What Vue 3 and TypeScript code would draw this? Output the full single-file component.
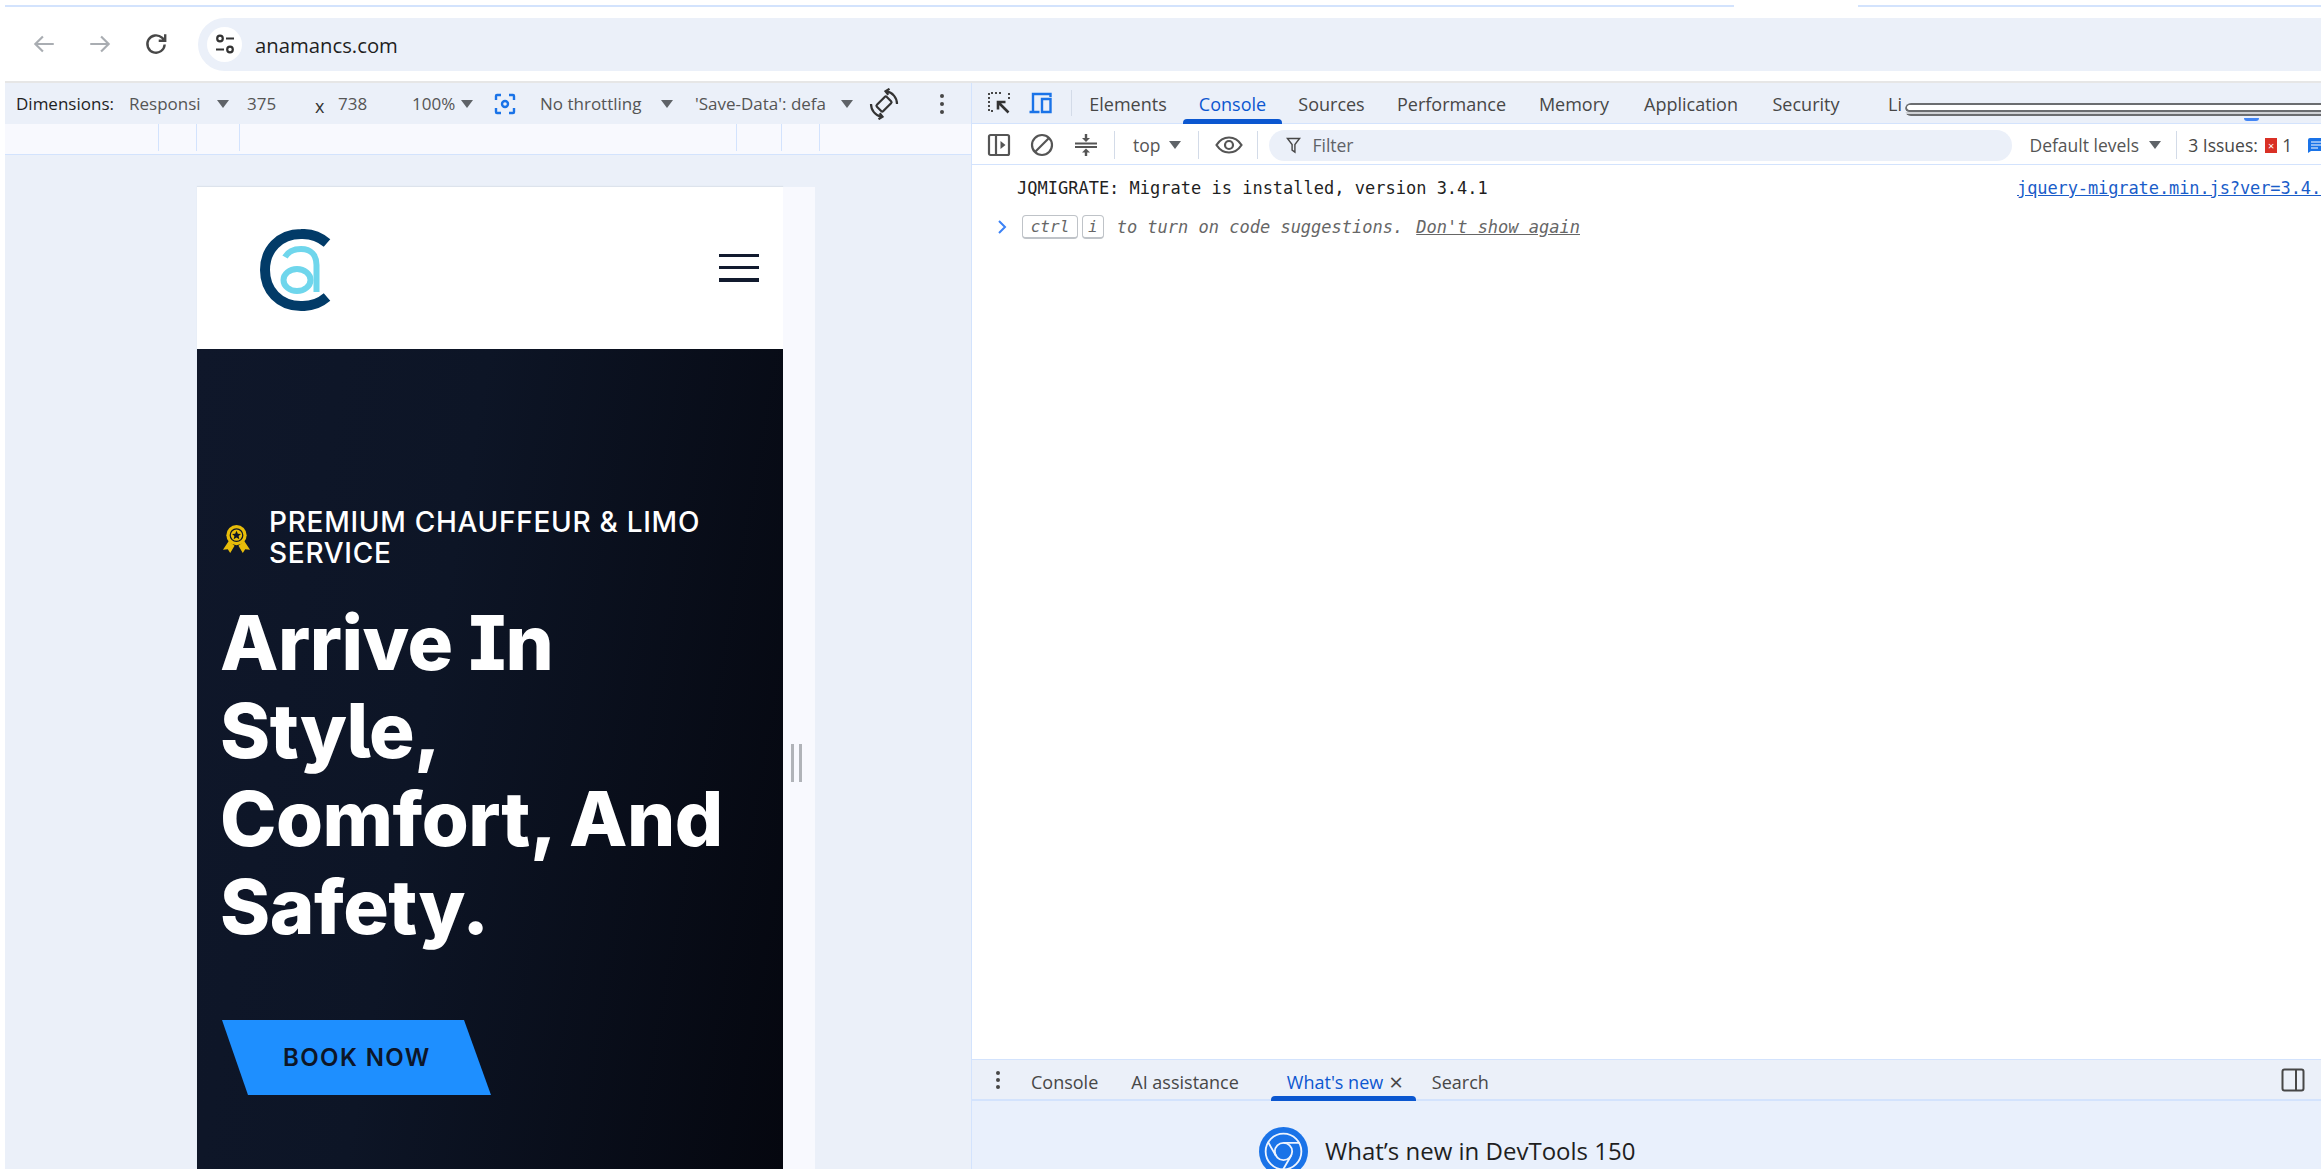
<script setup lang="ts">
const rulerColumns: number[] = [154, 38, 43, 497, 45, 38]
const panelTabs: { label: string; width: number; active?: boolean }[] = [
  { label: 'Elements', width: 110 },
  { label: 'Console', width: 99, active: true },
  { label: 'Sources', width: 99 },
  { label: 'Performance', width: 141 },
  { label: 'Memory', width: 104 },
  { label: 'Application', width: 130 },
  { label: 'Security', width: 100 },
]
const headingLines: string[] = ['Arrive In', 'Style,', 'Comfort, And', 'Safety.']
</script>

<template>
  <div class="window">
    <div class="frame-edge">
      <span class="edge-a"></span>
      <span class="edge-gap"></span>
      <span class="edge-b"></span>
    </div>

    <header class="browser-bar">
      <svg class="nav-icon back" viewBox="0 0 24 24"><path d="M21 12H4M11 5l-7 7 7 7" /></svg>
      <svg class="nav-icon forward" viewBox="0 0 24 24"><path d="M3 12h17M13 5l7 7-7 7" /></svg>
      <svg class="nav-icon reload" viewBox="0 0 24 24"><path d="M20 12.500a8 8 0 1 1-2.500-6.300L20 8.500M20.500 3v6h-6" /></svg>
      <div class="address">
        <span class="site-chip">
          <svg viewBox="0 0 24 24" class="tune"><circle cx="7" cy="6.500" r="2.800" /><path d="M13 6.500h8M3 17.500h8" /><circle cx="17" cy="17.500" r="2.800" /></svg>
        </span>
        <span class="url">anamancs.com</span>
      </div>
    </header>

    <div class="workspace">
      <section class="device-pane">
        <div class="device-toolbar">
          <span class="dt-label">Dimensions:</span>
          <span class="dt-value clip-responsive">Responsi</span>
          <span class="tri t1"></span>
          <span class="dt-value num-w">375</span>
          <span class="times">x</span>
          <span class="dt-value num-h">738</span>
          <span class="dt-value clip-zoom">100%</span>
          <span class="tri t2"></span>
          <svg class="capture" viewBox="0 0 24 24"><path d="M3 8V4a1 1 0 0 1 1-1h4M16 3h4a1 1 0 0 1 1 1v4M21 16v4a1 1 0 0 1-1 1h-4M8 21H4a1 1 0 0 1-1-1v-4" /><circle cx="12" cy="12" r="3" /></svg>
          <span class="dt-value throttle">No throttling</span>
          <span class="tri t3"></span>
          <span class="dt-value clip-save">'Save-Data': defa</span>
          <span class="tri t4"></span>
          <svg class="rotate" viewBox="0 0 32 32">
            <rect x="11.500" y="9" width="9" height="14" rx="1.500" transform="rotate(45 16 16)" />
            <path d="M18.300 3.200A13 13 0 0 1 29 16M13.700 28.800A13 13 0 0 1 3 16" />
            <path d="M21.500 0.800 17.500 3.200l2.800 3.500M10.500 31.200l4-2.400-2.800-3.500" />
          </svg>
          <span class="kebab"><i></i><i></i><i></i></span>
        </div>

        <div class="ruler">
          <span v-for="(w, i) in rulerColumns" :key="i" class="ruler-cell" :style="{ width: w + 'px' }"></span>
        </div>

        <div class="viewport">
          <div class="phone-row">
            <div class="phone">
              <div class="site-header">
                <svg class="logo" viewBox="0 0 72 82" role="img" aria-label="CA logo">
                  <path class="logo-c" d="M67 14A37 36 0 0 0 41 5C19 5 5 21 5 41s14 36 36 36a37 36 0 0 0 26-9" />
                  <ellipse class="logo-a" cx="37" cy="51" rx="13.500" ry="11" />
                  <path class="logo-a" d="M25 28c4-7 11-8 16-8 10 0 15.500 6 15.500 16v27" />
                </svg>
                <span class="burger"><i></i><i></i><i></i></span>
              </div>
              <div class="hero">
                <div class="tag">
                  <svg class="medal" viewBox="0 0 30 30">
                    <path d="M7 17 1 26l5-.5 2.500 4L13 22zM23 17l6 9-5-.5-2.500 4L17 22z" fill="#e8bd0a" />
                    <circle cx="15" cy="11" r="10.500" fill="#e8bd0a" />
                    <circle cx="15" cy="11" r="6.500" fill="none" stroke="#0e1627" stroke-width="1.300" />
                    <path d="m15 6.500 1.400 3 3.200.3-2.400 2.200.7 3.200-2.900-1.700-2.900 1.700.7-3.200-2.400-2.200 3.200-.3z" fill="#0e1627" />
                  </svg>
                  <span class="tag-text">PREMIUM CHAUFFEUR &amp; LIMO SERVICE</span>
                </div>
                <h1 class="title">
                  <span v-for="line in headingLines" :key="line" class="title-line">{{ line }}</span>
                </h1>
                <span class="book">BOOK NOW</span>
              </div>
            </div>
            <div class="phone-side">
              <span class="handle"></span>
            </div>
          </div>
        </div>
      </section>

      <section class="devtools">
        <nav class="panel-tabs">
          <svg class="inspect" viewBox="0 0 24 24">
            <path class="dash" d="M14 2H2v18h6M22 2v6" />
            <path class="arrow" d="M11 11l10.500 10.500M11 18.500V11h7.500" />
          </svg>
          <svg class="device" viewBox="0 0 24 24"><path d="M1 21h10M4.500 21V3H22v3M13.500 8H22v13h-8.500z" /></svg>
          <span class="v-sep tabs-sep"></span>
          <span
            v-for="t in panelTabs"
            :key="t.label"
            class="panel-tab"
            :class="{ active: t.active }"
            :style="{ width: t.width + 'px' }"
          >{{ t.label }}</span>
          <span class="panel-tab clipped-tab">Li</span>
          <span class="glitch"><i class="g1"></i><i class="g2"></i></span>
          <span class="glitch-dot"></span>
        </nav>

        <div class="console-bar">
          <svg class="cb-icon side" viewBox="0 0 24 24"><rect x="2" y="2" width="20" height="20" rx="1.500" /><path d="M9 2v20" /><path class="solid" d="m13.500 8 5 4-5 4z" /></svg>
          <svg class="cb-icon clear" viewBox="0 0 24 24"><circle cx="12" cy="12" r="10" /><path d="M5 19 19 5" /></svg>
          <svg class="cb-icon collapse" viewBox="0 0 24 24"><path d="M1 10.500h22M1 14h22" /><path class="solid" d="M12 9 8 5h2.800V1h2.400v4H16zM12 15.500l4 4h-2.800V23h-2.400v-3.500H8z" /></svg>
          <span class="v-sep s1"></span>
          <span class="cb-text top">top</span>
          <span class="tri t5"></span>
          <span class="v-sep s2"></span>
          <svg class="cb-icon eye" viewBox="0 0 28 24"><path d="M1.500 12C5 6.500 9 4.500 14 4.500S23 6.500 26.500 12C23 17.500 19 19.500 14 19.500S5 17.500 1.500 12z" /><circle cx="14" cy="12" r="4" /></svg>
          <span class="v-sep s3"></span>
          <div class="filter">
            <svg class="funnel" viewBox="0 0 16 20"><path d="M1.500 2.500h13L9.500 9v8l-3-2V9z" /></svg>
            <span class="filter-text">Filter</span>
          </div>
          <span class="cb-text levels">Default levels</span>
          <span class="tri t6"></span>
          <span class="v-sep s4"></span>
          <span class="cb-text issues">3 Issues:</span>
          <span class="err-badge">×</span>
          <span class="cb-text count">1</span>
          <svg class="msg-badge" viewBox="0 0 13 15"><path class="msg-bg" d="M0 2a2 2 0 0 1 2-2h11v13H3l-3 2z" /><path class="msg-lines" d="M3 4h10M3 7h10M3 10h7" /></svg>
        </div>

        <div class="console-body">
          <div class="log-row">
            <span class="log-text">JQMIGRATE: Migrate is installed, version 3.4.1</span>
            <span class="log-link">jquery-migrate.min.js?ver=3.4.</span>
          </div>
          <div class="prompt-row">
            <svg class="chevron" viewBox="0 0 10 16"><path d="m2 2 6 6-6 6" /></svg>
            <kbd class="key ctrl">ctrl</kbd>
            <kbd class="key">i</kbd>
            <span class="hint">to turn on code suggestions.</span>
            <span class="hint dismiss">Don't show again</span>
          </div>
        </div>

        <div class="drawer">
          <div class="drawer-tabs">
            <span class="kebab drawer-kebab"><i></i><i></i><i></i></span>
            <span class="drawer-tab first">Console</span>
            <span class="drawer-tab ai">AI assistance</span>
            <span class="drawer-tab news">What's new <span class="close">×</span></span>
            <span class="drawer-tab search">Search</span>
            <svg class="dock" viewBox="0 0 24 24"><rect x="1.500" y="1.500" width="21" height="21" rx="2" /><path d="M15 1.500v21" /></svg>
          </div>
          <div class="drawer-body">
            <svg class="chrome" viewBox="0 0 48 48">
              <circle cx="24" cy="24" r="24" fill="#1a73e8" />
              <g fill="none" stroke="#eef4fe" stroke-width="1.800">
                <circle cx="24" cy="24" r="17.500" />
                <circle cx="24" cy="24" r="8.500" />
                <path d="M24 15.500h16M16.600 28.200 8.700 14.500M31.400 28.200l-7.900 13.600" />
              </g>
            </svg>
            <h2 class="news-title">What’s new in DevTools 150</h2>
          </div>
        </div>
      </section>
    </div>
  </div>
</template>

<style>
html, body { margin: 0; background: #fff; overflow: hidden; }
</style>

<style scoped>
.window {
  width: 2321px;
  height: 1169px;
  overflow: hidden;
  background: #fff;
  display: flex;
  flex-direction: column;
  font-family: "Open Sans", "Noto Sans", sans-serif;
  color: #474747;
}
.frame-edge { height: 7px; flex: none; display: flex; align-items: flex-end; padding-left: 5px; }
.edge-a, .edge-b { height: 2px; background: #d3e3fd; }
.edge-a { width: 1729px; }
.edge-gap { width: 124px; }
.edge-b { flex: 1; }

.browser-bar {
  height: 76px;
  flex: none;
  display: flex;
  align-items: center;
  padding-left: 26px;
  margin-left: 5px;
  box-sizing: border-box;
  border-bottom: 2px solid #e6e6e6;
}
.nav-icon { width: 26px; height: 26px; fill: none; stroke-width: 2; flex: none; stroke: #a9adb2; }
.forward { margin-left: 30px; }
.reload { margin-left: 30px; stroke: #474747; stroke-width: 2.200; }
.address {
  margin-left: 29px;
  height: 53px;
  flex: 1;
  background: #ebf0f9;
  border-radius: 27px 0 0 27px;
  display: flex;
  align-items: center;
  padding-left: 9px;
}
.site-chip {
  width: 35px;
  height: 35px;
  background: #fff;
  border-radius: 50%;
  display: flex;
  align-items: center;
  justify-content: center;
}
.tune { width: 24px; height: 24px; fill: none; stroke: #333; stroke-width: 2.200; }
.url { margin-left: 13px; padding-top: 2px; font-size: 20.300px; color: #1f1f1f; }

.workspace { flex: 1; display: flex; min-height: 0; }
.device-pane { width: 966px; margin-left: 5px; flex: none; display: flex; flex-direction: column; min-height: 0; }
.device-toolbar {
  height: 41px;
  flex: none;
  background: #ebf0f9;
  display: flex;
  align-items: center;
  padding-left: 11px;
  font-size: 17px;
  white-space: nowrap;
  color: #3c3c3c;
}
.dt-label { width: 113px; flex: none; color: #1f1f1f; }
.dt-value { flex: none; color: #555; }
.clip-responsive { width: 78px; }
.tri {
  flex: none;
  width: 0;
  height: 0;
  border-left: 6px solid transparent;
  border-right: 6px solid transparent;
  border-top: 8px solid #5f6368;
}
.t1 { margin-left: 10px; }
.num-w { margin-left: 18px; width: 36px; }
.times { margin-left: 32px; width: 23px; font-size: 18px; margin-top: 5px; color: #333; }
.num-h { width: 40px; }
.clip-zoom { margin-left: 34px; width: 40px; }
.t2 { margin-left: 9px; }
.capture { width: 24px; height: 24px; margin-left: 20px; fill: none; stroke: #1a73e8; stroke-width: 2.400; flex: none; }
.throttle { margin-left: 23px; width: 112px; }
.t3 { margin-left: 9px; }
.clip-save { margin-left: 22px; width: 142px; }
.t4 { margin-left: 4px; }
.rotate { width: 32px; height: 32px; margin-left: 15px; fill: none; stroke: #333; stroke-width: 2.200; flex: none; }
.kebab { display: flex; flex-direction: column; gap: 4px; flex: none; margin-left: 40px; }
.kebab i { width: 4px; height: 4px; border-radius: 50%; background: #474747; display: block; }

.ruler {
  height: 31px;
  flex: none;
  box-sizing: border-box;
  background: #f8f9fe;
  border-bottom: 1px solid #d3e3fd;
  display: flex;
  padding-bottom: 3px;
}
.ruler-cell { flex: none; box-sizing: border-box; border-right: 1px solid #d3e3fd; }

.viewport { flex: 1; background: #ebf0f9; min-height: 0; padding: 32px 0 0 192px; overflow: hidden; }
.phone-row { display: flex; height: 100%; }
.phone { width: 586px; flex: none; background: #fff; display: flex; flex-direction: column; box-shadow: 0 -1px 1px #dde3ec; }
.site-header { height: 162px; flex: none; display: flex; align-items: center; justify-content: space-between; padding: 0 24px 0 63px; }
.logo { width: 72px; height: 82px; margin-top: 3px; }
.logo-c { fill: none; stroke: #023b68; stroke-width: 10; }
.logo-a { fill: none; stroke: #6fd6ec; stroke-width: 6; }
.burger { width: 40px; display: flex; flex-direction: column; gap: 9px; margin-top: 0; }
.burger i { display: block; height: 3px; background: #111a2e; }
.burger i:last-child { height: 4px; }
.hero {
  flex: 1;
  background: linear-gradient(100deg, #0f172a 0%, #0d1526 40%, #05070f 100%);
  padding: 158px 20px 0 25px;
  display: flex;
  flex-direction: column;
  align-items: flex-start;
}
.tag { display: flex; align-items: center; }
.medal { width: 29px; height: 30px; flex: none; margin-top: 1px; }
.tag-text {
  margin-left: 18px;
  width: 480px;
  font-family: "Inter", "Noto Sans", sans-serif;
  font-weight: 500;
  font-size: 28px;
  letter-spacing: 0.72px;
  line-height: 31px;
  color: #fff;
}
.title {
  margin: 29px 0 0 -2px;
  font-family: "Inter", "Noto Sans", sans-serif;
  font-weight: 800;
  font-size: 76px;
  line-height: 88px;
  letter-spacing: -0.5px;
  color: #fff;
  font-feature-settings: "ss02", "cv08";
}
.title-line { display: block; white-space: nowrap; }
.book {
  margin-top: 70px;
  width: 269px;
  height: 75px;
  box-sizing: border-box;
  background: #1e8fff;
  clip-path: polygon(0 0, 242px 0, 100% 100%, 26px 100%);
  display: flex;
  align-items: center;
  padding-left: 61px;
  font-family: "Inter", "Noto Sans", sans-serif;
  font-weight: 600;
  font-size: 24px;
  letter-spacing: 1.4px;
  color: #0d1628;
}
.phone-side { width: 32px; flex: none; background: #f8f9fe; display: flex; justify-content: center; }
.handle {
  width: 5px;
  height: 38px;
  margin: 557px 0 0 -6px;
  border-left: 3px solid #b0b3b8;
  border-right: 3px solid #b0b3b8;
}

.devtools { flex: 1; min-width: 0; display: flex; flex-direction: column; border-left: 1px solid #d3e3fd; }
.panel-tabs {
  height: 41px;
  flex: none;
  position: relative;
  box-sizing: border-box;
  background: #ebf0f9;
  border-bottom: 1px solid #d3e3fd;
  display: flex;
  align-items: center;
  padding-left: 15px;
  white-space: nowrap;
}
.inspect { width: 24px; height: 24px; flex: none; }
.inspect .dash { fill: none; stroke: #474747; stroke-width: 2; stroke-dasharray: 2 2; }
.inspect .arrow { fill: none; stroke: #333; stroke-width: 2.600; }
.device { width: 25px; height: 24px; flex: none; margin-left: 17px; fill: none; stroke: #1a73e8; stroke-width: 2.400; }
.v-sep { display: block; width: 1px; background: #d3dbe8; flex: none; }
.tabs-sep { height: 26px; margin-left: 18px; margin-right: 1px; }
.panel-tab {
  height: 100%;
  flex: none;
  box-sizing: border-box;
  padding-top: 2px;
  display: flex;
  align-items: center;
  justify-content: center;
  font-size: 18px;
  color: #474747;
  position: relative;
}
.panel-tab.active { color: #0b57d0; }
.panel-tab.active::after {
  content: "";
  position: absolute;
  left: 0;
  right: 0;
  bottom: -1px;
  height: 5px;
  background: #0b57d0;
  border-radius: 4px 4px 0 0;
}
.clipped-tab { justify-content: flex-start; margin-left: 32px; }
.glitch { position: absolute; left: 933px; right: 0; top: 20px; height: 13px; display: block; border-radius: 6px 0 0 6px; overflow: hidden; }
.glitch i { display: block; position: absolute; left: 0; right: 0; }
.g1 { top: 0; height: 9px; background: #fff; border: solid #6b6d70; border-width: 2px 0; border-left: 2px solid #6b6d70; box-sizing: border-box; border-radius: 5px 0 0 5px; }
.g2 { top: 9px; height: 4px; background: #cfd1d5; border-bottom: 2px solid #6b6d70; box-sizing: border-box; }
.glitch-dot { position: absolute; left: 1272px; width: 15px; height: 3px; bottom: 2px; background: #4285f4; border-radius: 0 0 8px 8px; }

.console-bar {
  height: 41px;
  flex: none;
  box-sizing: border-box;
  padding-top: 2px;
  background: #fff;
  border-bottom: 1px solid #d3e3fd;
  display: flex;
  align-items: center;
  padding-left: 15px;
  white-space: nowrap;
  font-size: 17.500px;
}
.cb-icon { flex: none; fill: none; stroke: #555; stroke-width: 2.200; width: 24px; height: 24px; }
.cb-icon .solid { fill: #555; stroke: none; }
.clear { margin-left: 19px; }
.collapse { margin-left: 20px; }
.s1 { height: 28px; margin-left: 16px; }
.top { margin-left: 18px; width: 29px; color: #555; }
.t5 { margin-left: 8px; }
.s2 { height: 28px; margin-left: 17px; }
.eye { width: 28px; margin-left: 16px; }
.s3 { height: 28px; margin-left: 14px; }
.filter {
  margin-left: 11px;
  width: 743px;
  height: 31px;
  flex: none;
  background: #ebf0f9;
  border-radius: 16px;
  display: flex;
  align-items: center;
  padding-left: 17px;
  box-sizing: border-box;
}
.funnel { width: 15px; height: 19px; fill: none; stroke: #474747; stroke-width: 1.500; }
.filter-text { margin-left: 11px; color: #5f6368; }
.levels { margin-left: 17px; width: 112px; color: #555; }
.t6 { margin-left: 10px; }
.s4 { height: 28px; margin-left: 15px; }
.issues { margin-left: 11px; width: 68px; }
.err-badge {
  margin-left: 9px;
  width: 12px;
  height: 15px;
  flex: none;
  background: #d93025;
  color: #fff;
  font-size: 11px;
  line-height: 15px;
  text-align: center;
}
.count { margin-left: 5px; width: 12px; }
.msg-badge { margin-left: 14px; width: 13px; height: 15px; flex: none; }
.msg-bg { fill: #1a73e8; }
.msg-lines { stroke: #fff; stroke-width: 1.200; fill: none; }

.console-body { flex: 1; min-height: 0; background: #fff; font-family: "DejaVu Sans Mono", "Liberation Mono", monospace; font-size: 17px; padding-top: 13px; }
.log-row { display: flex; height: 20px; line-height: 20px; padding-left: 45px; white-space: nowrap; }
.log-text { width: 1000px; flex: none; color: #1f1f1f; }
.log-link { color: #1a5dc9; text-decoration: underline; letter-spacing: -0.1px; }
.prompt-row { margin-top: 16px; height: 25px; display: flex; align-items: center; padding-left: 25px; font-style: italic; color: #666; white-space: nowrap; }
.chevron { width: 10px; height: 16px; fill: none; stroke: #3b82f6; stroke-width: 2; flex: none; margin-right: 15px; }
.key {
  font: inherit;
  box-sizing: border-box;
  height: 24px;
  line-height: 21px;
  padding: 0 5px;
  border: 1px solid #bfc3c8;
  border-bottom-width: 2px;
  border-radius: 4px;
  margin-right: 4px;
  font-size: 16px;
  flex: none;
}
.ctrl { width: 56px; text-align: center; }
.hint { margin-left: 9px; font-size: 17px; }
.dismiss { margin-left: 13px; text-decoration: underline; }

.drawer { height: 110px; flex: none; display: flex; flex-direction: column; }
.drawer-tabs {
  height: 42px;
  flex: none;
  box-sizing: border-box;
  background: #ebf0f9;
  border-top: 1px solid #d3e3fd;
  border-bottom: 2px solid #d3e3fd;
  display: flex;
  align-items: center;
  white-space: nowrap;
  font-size: 18px;
}
.drawer-kebab { margin-left: 24px; gap: 3px; }
.drawer-tab { flex: none; color: #474747; padding-top: 4px; }
.first { margin-left: 31px; }
.ai { margin-left: 33px; }
.news {
  margin-left: 32px;
  width: 145px;
  align-self: stretch;
  box-sizing: border-box;
  padding-left: 16px;
  display: flex;
  align-items: center;
  color: #0b57d0;
  position: relative;
}
.news::after {
  content: "";
  position: absolute;
  left: 0;
  right: 0;
  bottom: -2px;
  height: 5px;
  background: #0b57d0;
  border-radius: 4px 4px 0 0;
}
.close { margin-left: 6px; color: #474747; font-size: 24px; line-height: 1; }
.search { margin-left: 16px; }
.dock { width: 24px; height: 24px; margin-left: auto; margin-right: 16px; fill: none; stroke: #474747; stroke-width: 2; flex: none; }
.drawer-body { flex: 1; min-height: 0; overflow: hidden; background: #e9f0fc; display: flex; align-items: flex-start; padding: 26px 0 0 287px; }
.chrome { width: 49px; height: 49px; flex: none; }
.news-title { margin: 7px 0 0 17px; font-size: 24px; font-weight: 500; color: #1f1f1f; white-space: nowrap; line-height: 34px; }
</style>
